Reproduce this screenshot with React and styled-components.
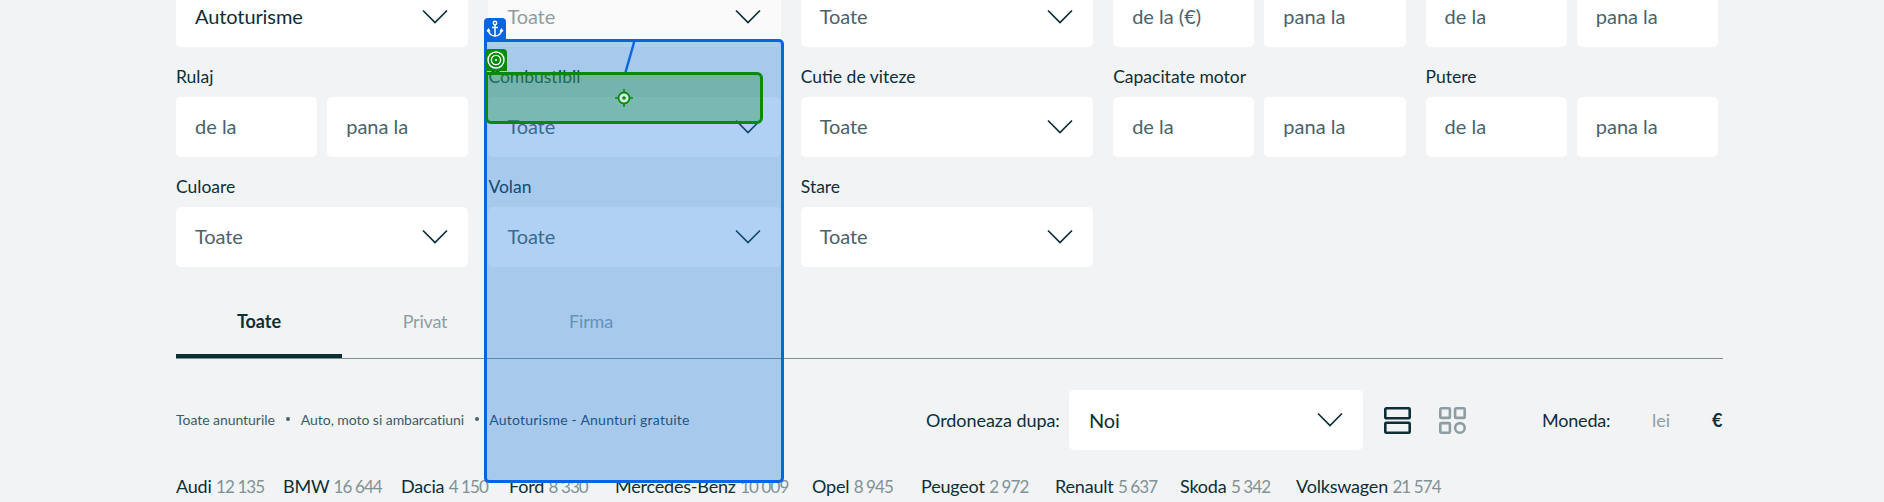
import React from 'react';
import styled, { createGlobalStyle } from 'styled-components';

const GlobalStyle = createGlobalStyle`
  html, body {
    margin: 0;
    height: 502px;
    overflow: hidden;
    background: #f2f3f5;
  }
  body {
    font-family: Lato, "Open Sans", sans-serif;
    color: #0c2f36;
  }
`;

const filterRows = [
  [
    { label: '', value: 'Autoturisme', strong: true },
    { label: '', value: 'Toate', faded: true },
    { label: '', value: 'Toate' },
    { label: '', from: 'de la (€)', to: 'pana la' },
    { label: '', from: 'de la', to: 'pana la' },
  ],
  [
    { label: 'Rulaj', from: 'de la', to: 'pana la' },
    { label: 'Combustibil', value: 'Toate' },
    { label: 'Cutie de viteze', value: 'Toate' },
    { label: 'Capacitate motor', from: 'de la', to: 'pana la' },
    { label: 'Putere', from: 'de la', to: 'pana la' },
  ],
  [
    { label: 'Culoare', value: 'Toate' },
    { label: 'Volan', value: 'Toate' },
    { label: 'Stare', value: 'Toate' },
  ],
];

const makes = [
  { name: 'Audi', count: '12 135', width: 107 },
  { name: 'BMW', count: '16 644', width: 118 },
  { name: 'Dacia', count: '4 150', width: 108 },
  { name: 'Ford', count: '8 330', width: 106 },
  { name: 'Mercedes-Benz', count: '10 009', width: 197 },
  { name: 'Opel', count: '8 945', width: 109 },
  { name: 'Peugeot', count: '2 972', width: 134 },
  { name: 'Renault', count: '5 637', width: 125 },
  { name: 'Skoda', count: '5 342', width: 116 },
  { name: 'Volkswagen', count: '21 574', width: 143 },
];

const Chevron = () => (
  <ChevronIcon width="26" height="15" viewBox="0 0 26 15">
    <path d="M1 1.5 L13 13.5 L25 1.5" fill="none" stroke="#0c2f36" strokeWidth="1.7" />
  </ChevronIcon>
);

const Select = ({ value, faded, strong }) => (
  <SelectBox $faded={faded}>
    <SelectText $faded={faded} $strong={strong}>{value}</SelectText>
    <Chevron />
  </SelectBox>
);

const Field = ({ field }) => (
  <FieldCell>
    <FieldLabel>{field.label}</FieldLabel>
    {field.value ? (
      <Select value={field.value} faded={field.faded} strong={field.strong} />
    ) : (
      <RangePair>
        <RangeInput>{field.from}</RangeInput>
        <RangeInput>{field.to}</RangeInput>
      </RangePair>
    )}
  </FieldCell>
);

const App = () => (
  <Page>
    <GlobalStyle />
    <FilterGrid>
      {filterRows.flat().map((field, i) => <Field key={i} field={field} />)}
    </FilterGrid>

    <Tabs>
      <Tab $active>Toate</Tab>
      <Tab>Privat</Tab>
      <Tab>Firma</Tab>
    </Tabs>

    <Toolbar>
      <Breadcrumbs>
        <span>Toate anunturile</span>
        <Dot />
        <span>Auto, moto si ambarcatiuni</span>
        <Dot />
        <LastCrumb>Autoturisme - Anunturi gratuite</LastCrumb>
      </Breadcrumbs>
      <SortLabel>Ordoneaza dupa:</SortLabel>
      <SortSelect>
        <SelectText $strong>Noi</SelectText>
        <Chevron />
      </SortSelect>
      <ViewIcon width="27" height="27" viewBox="0 0 27 27">
        <rect x="1.3" y="1.3" width="24.4" height="10" rx="1" fill="none" stroke="#0c2f36" strokeWidth="2.6" />
        <rect x="1.3" y="15.7" width="24.4" height="10" rx="1" fill="none" stroke="#0c2f36" strokeWidth="2.6" />
      </ViewIcon>
      <ViewIcon width="27" height="27" viewBox="0 0 27 27">
        <rect x="1.3" y="1.3" width="9.6" height="9.6" rx="1" fill="none" stroke="#8d9ea2" strokeWidth="2.6" />
        <rect x="16.1" y="1.3" width="9.6" height="9.6" rx="1" fill="none" stroke="#8d9ea2" strokeWidth="2.6" />
        <rect x="1.3" y="16.1" width="9.6" height="9.6" rx="1" fill="none" stroke="#8d9ea2" strokeWidth="2.6" />
        <circle cx="20.9" cy="20.9" r="4.8" fill="none" stroke="#8d9ea2" strokeWidth="2.6" />
      </ViewIcon>
      <CurrencyLabel>Moneda:</CurrencyLabel>
      <CurrencyOption>lei</CurrencyOption>
      <CurrencyOption $active>€</CurrencyOption>
    </Toolbar>

    <Makes>
      {makes.map((make) => (
        <Make key={make.name} $width={make.width}>{make.name} <Count>{make.count}</Count></Make>
      ))}
    </Makes>

    <ElementBox>
      <Badge $top="-24px" $left="-3px" $color="#0a64e0">
        <svg width="18" height="18" viewBox="0 0 18 18" fill="none" stroke="#fff" strokeWidth="1.5">
          <circle cx="9" cy="3" r="1.7" />
          <path d="M9 4.7 V16 M6 7.5 H12 M2.5 10 C2.5 14 6 16 9 16 C12 16 15.5 14 15.5 10 M1.2 11.5 L2.5 9.3 L4 11.5 M14 11.5 L15.5 9.3 L16.8 11.5" />
        </svg>
      </Badge>
      <AnchorLine width="14" height="35" viewBox="0 0 14 35">
        <path d="M12 0 L2 35" stroke="#0a64e0" strokeWidth="2.4" />
      </AnchorLine>
    </ElementBox>

    <TargetBox>
      <Badge $top="-26px" $left="-3px" $color="#078a0e">
        <svg width="20" height="20" viewBox="0 0 20 20" fill="none" stroke="#fff">
          <circle cx="10" cy="10" r="8" strokeWidth="1.4" />
          <circle cx="10" cy="10" r="4.6" strokeWidth="1.4" />
          <circle cx="10" cy="10" r="1" fill="#fff" stroke="none" />
        </svg>
      </Badge>
      <Crosshair width="18" height="18" viewBox="0 0 18 18" fill="none" stroke="#078a0e">
        <circle cx="9" cy="9" r="5.5" strokeWidth="1.8" fill="#d5ebe0" />
        <circle cx="9" cy="9" r="1.8" fill="#078a0e" stroke="none" />
        <path d="M9 0 V3.5 M9 14.5 V18 M0 9 H3.5 M14.5 9 H18" strokeWidth="1.6" />
      </Crosshair>
    </TargetBox>
  </Page>
);

const Page = styled.div`
  position: relative;
  height: 502px;
  overflow: hidden;
  padding: 0 161px 0 176px;
  box-sizing: border-box;
`;

const FilterGrid = styled.div`
  display: grid;
  grid-template-columns: repeat(5, 292.4px);
  column-gap: 20px;
  margin-top: -63px;
`;

const FieldCell = styled.div`
  display: flex;
  flex-direction: column;
`;

const FieldLabel = styled.div`
  height: 50px;
  line-height: 24px;
  padding-top: 18px;
  box-sizing: border-box;
  font-size: 17.5px;
`;

const SelectBox = styled.div`
  height: 60px;
  box-sizing: border-box;
  display: flex;
  align-items: center;
  justify-content: space-between;
  padding: 0 20px 2px 19px;
  border-radius: 5px;
  background: ${(p) => (p.$faded ? '#f9faf9' : '#fff')};
`;

const SortSelect = styled(SelectBox)`
  width: 294px;
  flex: none;
  padding: 0 20px 1px;
  margin-right: 21px;
`;

const SelectText = styled.span`
  font-size: 20px;
  letter-spacing: -0.1px;
  color: ${(p) => (p.$faded ? '#8d9ea2' : p.$strong ? '#0c2f36' : '#4a636b')};
`;

const ChevronIcon = styled.svg`
  display: block;
  flex: none;
`;

const RangePair = styled.div`
  display: grid;
  grid-template-columns: 1fr 1fr;
  column-gap: 10px;
`;

const RangeInput = styled.div`
  height: 60px;
  line-height: 58px;
  padding-left: 19px;
  border-radius: 5px;
  background: #fff;
  font-size: 20px;
  color: #4a636b;
`;

const Tabs = styled.div`
  display: flex;
  width: 1547px;
  height: 91px;
  border-bottom: 1px solid #7d8f92;
`;

const Tab = styled.div`
  width: 166px;
  height: 91px;
  line-height: 108px;
  text-align: center;
  font-size: 18px;
  font-weight: ${(p) => (p.$active ? 700 : 400)};
  letter-spacing: ${(p) => (p.$active ? '0' : '-0.2px')};
  color: ${(p) => (p.$active ? '#0c2f36' : '#8d9ea2')};
  border-bottom: ${(p) => (p.$active ? '4px solid #0c2f36' : '0')};
  box-sizing: border-box;
`;

const Toolbar = styled.div`
  display: flex;
  align-items: center;
  height: 60px;
  margin-top: 31px;
`;

const Breadcrumbs = styled.div`
  display: flex;
  align-items: center;
  width: 750px;
  flex: none;
  padding-bottom: 2px;
  box-sizing: border-box;
  font-size: 14px;
  letter-spacing: -0.05px;
  color: #3f5a62;
`;

const LastCrumb = styled.span`
  margin-left: -1px;
  letter-spacing: 0.23px;
  color: #1d3f52;
`;

const Dot = styled.i`
  width: 4px;
  height: 4px;
  margin: 0 11px;
  border-radius: 50%;
  background: #4a636b;
`;

const SortLabel = styled.span`
  width: 143px;
  flex: none;
  padding-bottom: 1px;
  font-size: 18px;
  letter-spacing: -0.05px;
`;

const ViewIcon = styled.svg`
  flex: none;
  margin-right: 28px;
`;

const CurrencyLabel = styled.span`
  flex: none;
  margin-left: 48px;
  width: 110px;
  padding-bottom: 1px;
  font-size: 18px;
  letter-spacing: -0.2px;
`;

const CurrencyOption = styled.span`
  flex: none;
  width: 60px;
  padding-bottom: 1px;
  font-size: 18px;
  font-weight: ${(p) => (p.$active ? 700 : 400)};
  color: ${(p) => (p.$active ? '#0c2f36' : '#8d9ea2')};
`;

const Makes = styled.div`
  display: flex;
  margin-top: 24px;
  font-size: 18px;
  line-height: 24px;
`;

const Make = styled.span`
  flex: none;
  width: ${(p) => p.$width}px;
  white-space: nowrap;
  letter-spacing: -0.2px;
`;

const Count = styled.span`
  font-size: 17px;
  letter-spacing: -0.9px;
  color: #7f9296;
`;

const ElementBox = styled.div`
  position: absolute;
  left: 484px;
  top: 39px;
  width: 300px;
  height: 444px;
  box-sizing: border-box;
  border: 3px solid #0a64e0;
  border-radius: 0 5px 5px 5px;
  background: rgba(30, 123, 222, 0.35);
`;

const TargetBox = styled.div`
  position: absolute;
  left: 485px;
  top: 72px;
  width: 278px;
  height: 52px;
  box-sizing: border-box;
  border: 3px solid #078a0e;
  border-radius: 0 6px 6px 6px;
  background: rgba(40, 150, 80, 0.4);
`;

const Badge = styled.div`
  position: absolute;
  top: ${(p) => p.$top};
  left: ${(p) => p.$left};
  width: 22px;
  height: 22px;
  display: flex;
  align-items: center;
  justify-content: center;
  border-radius: 4px 4px 0 0;
  background: ${(p) => p.$color};
`;

const AnchorLine = styled.svg`
  position: absolute;
  left: 136px;
  top: -3px;
`;

const Crosshair = styled.svg`
  position: absolute;
  left: 127px;
  top: 14px;
`;

export default App;
